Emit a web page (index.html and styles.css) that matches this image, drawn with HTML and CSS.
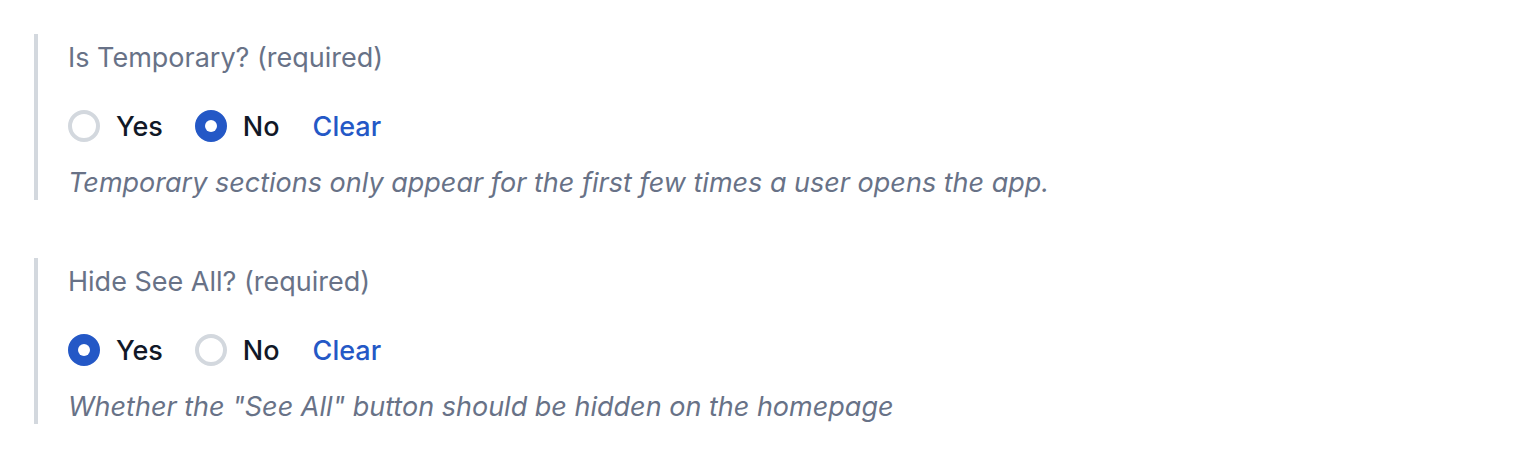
FILE: index.html
```html
<!DOCTYPE html>
<html lang="en">
<head>
    <meta charset="UTF-8">
    <meta name="viewport" content="width=device-width, initial-scale=1.0">
    <title>Section Settings</title>
    <link rel="stylesheet" href="styles.css">
</head>
<body>
    <div class="form">
        <!-- Is Temporary -->
        <div class="field">
            <div class="field-label">Is Temporary? (required)</div>
            <div class="options">
                <label class="option"><input type="radio" name="temporary" class="radio"> Yes</label>
                <label class="option"><input type="radio" name="temporary" class="radio" checked> No</label>
                <a href="#" class="clear">Clear</a>
            </div>
            <div class="field-help">Temporary sections only appear for the first few times a user opens the app.</div>
        </div>

        <!-- Hide See All -->
        <div class="field">
            <div class="field-label">Hide See All? (required)</div>
            <div class="options">
                <label class="option"><input type="radio" name="seeall" class="radio" checked> Yes</label>
                <label class="option"><input type="radio" name="seeall" class="radio"> No</label>
                <a href="#" class="clear">Clear</a>
            </div>
            <div class="field-help">Whether the "See All" button should be hidden on the homepage</div>
        </div>
    </div>
</body>
</html>
```

FILE: styles.css
```css
:root {
    --color-border: #d3d8de;
    --color-muted: #687287;
    --color-text: #111827;
    --color-blue: #2458c6;
}

* {
    margin: 0;
    padding: 0;
    box-sizing: border-box;
}

body {
    font-family: 'Inter', 'Noto Sans', sans-serif;
    background: #ffffff;
    color: var(--color-text);
}

.form {
    display: flex;
    flex-direction: column;
    gap: 58px;
    padding: 34px 0 0 34px;
}

/* Field block with left rule */
.field {
    border-left: 4px solid var(--color-border);
    padding: 8px 0 0 30px;
}

.field-label {
    font-size: 27px;
    line-height: 32px;
    color: var(--color-muted);
}

.options {
    display: flex;
    align-items: center;
    margin-top: 36px;
    height: 32px;
}

.option {
    display: flex;
    align-items: center;
    gap: 16px;
    font-size: 27px;
    font-weight: 500;
    margin-right: 32px;
}

.radio {
    appearance: none;
    -webkit-appearance: none;
    width: 32px;
    height: 32px;
    border-radius: 50%;
    border: 4px solid var(--color-border);
    background: #ffffff;
    display: flex;
    align-items: center;
    justify-content: center;
    margin: 0;
}

.radio:checked {
    border-color: var(--color-blue);
    background: var(--color-blue);
}

.radio:checked::after {
    content: "";
    width: 12px;
    height: 12px;
    border-radius: 50%;
    background: #ffffff;
}

.clear {
    font-size: 27px;
    font-weight: 500;
    color: var(--color-blue);
    text-decoration: none;
    margin-left: 1px;
}

.field-help {
    margin-top: 24px;
    font-size: 27px;
    line-height: 34px;
    font-style: italic;
    color: var(--color-muted);
}
```
